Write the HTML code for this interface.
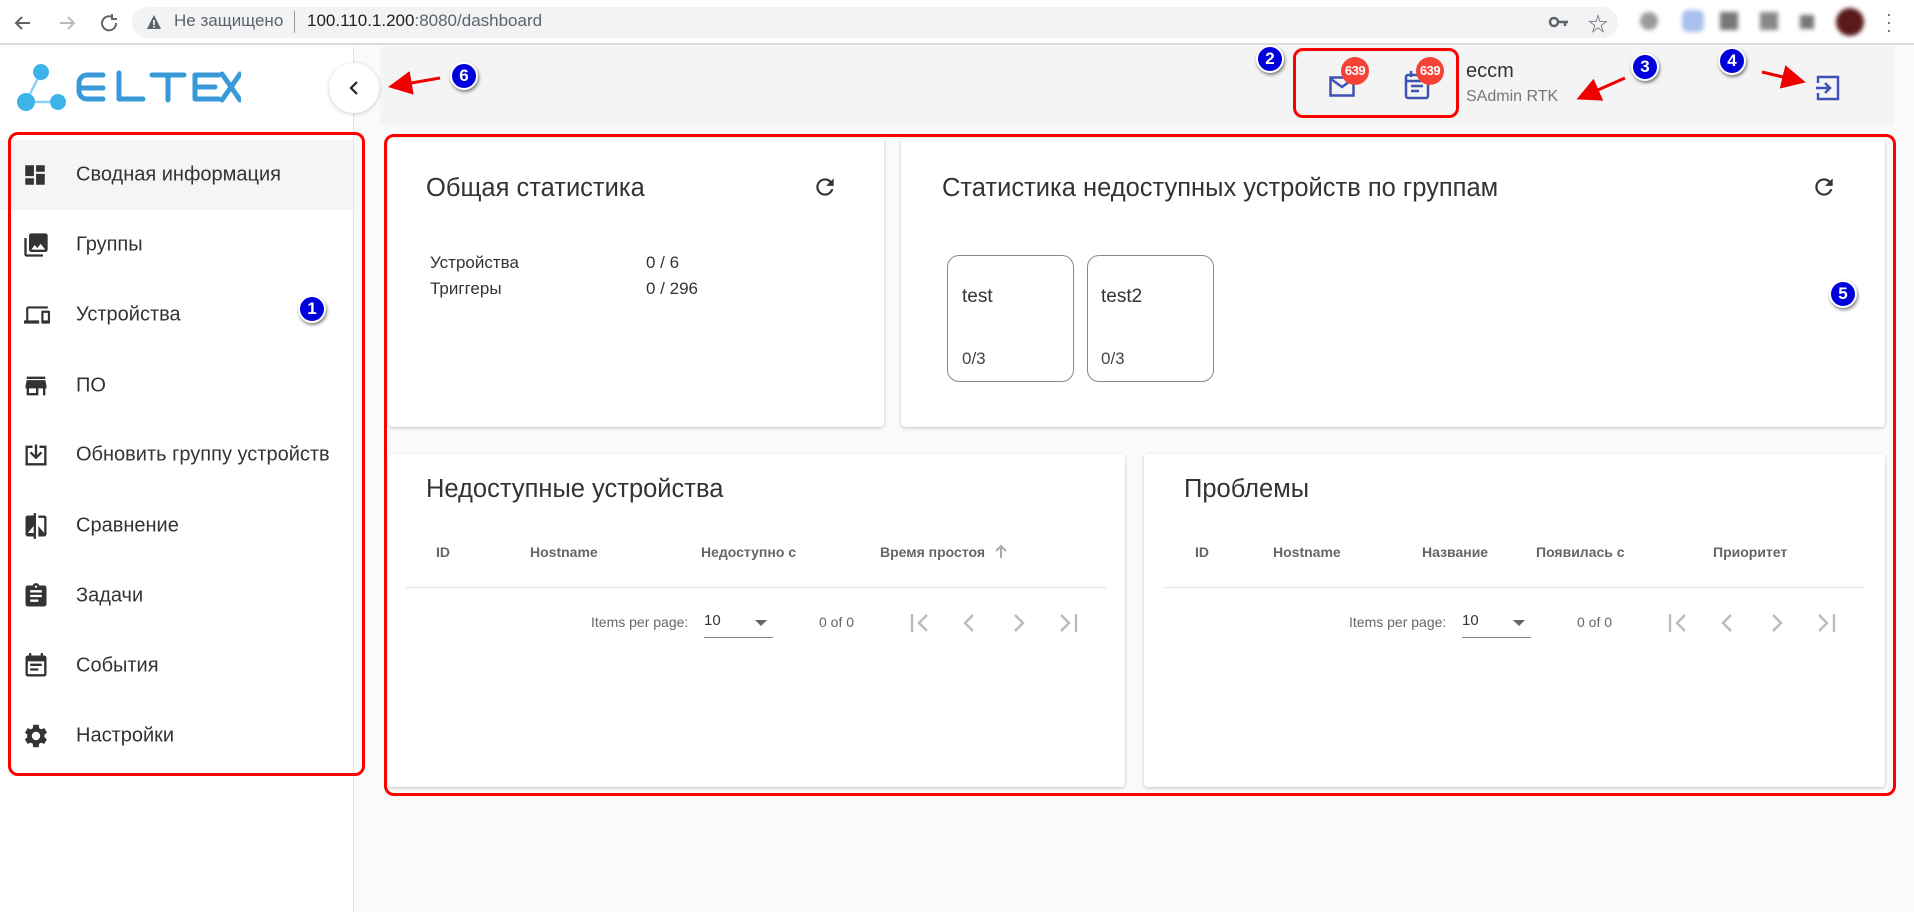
<!DOCTYPE html>
<html><head><meta charset="utf-8">
<style>
*{margin:0;padding:0;box-sizing:border-box}
body{width:1914px;height:912px;overflow:hidden;background:#fafafa;font-family:"Liberation Sans","Noto Sans CJK JP",sans-serif;color:#333;position:relative}
.a{position:absolute}
.chrome{left:0;top:0;width:1914px;height:45px;background:#fff;border-bottom:2px solid #dadce0}
.url{left:132px;top:7px;width:1486px;height:31px;background:#f1f3f4;border-radius:16px}
.side{left:0;top:47px;width:354px;height:865px;background:#fff;border-right:1px solid #e3e3e3}
.head{left:380px;top:47px;width:1514px;height:78px;background:#f4f4f4}
.nav{left:0;width:354px;height:70px;font-size:20px;color:#333}
.nav span{position:absolute;left:76px;top:50%;transform:translateY(-50%)}
.nav svg{position:absolute;left:22px;top:50%;transform:translateY(-50%)}
.card{background:#fff;box-shadow:0 1px 3px rgba(0,0,0,.22);border-radius:4px}
.title{font-size:25.5px;color:#333}
.th{font-size:14px;color:#666;font-weight:bold}
.pg{font-size:14px;color:#666}
.redbox{border:3px solid #f00;border-radius:10px}
.num{width:28px;height:28px;border-radius:50%;background:#0000dd;border:2px solid #fff;box-shadow:1px 2px 3px rgba(0,0,0,.5);color:#fff;font-weight:bold;font-size:17px;text-align:center;line-height:24px}
.badge{width:28px;height:28px;border-radius:50%;background:#f44336;color:#fff;font-size:13px;font-weight:bold;text-align:center;line-height:28px;letter-spacing:-.5px}
.tile{width:127px;height:127px;border:1px solid #888;border-radius:12px;background:#fff}
</style></head><body>
<div class="a chrome"></div>
<svg class="a" style="left:12px;top:12px" width="110" height="22" viewBox="0 0 110 22"><path d="M18 11H4M10 5l-6 6 6 6" stroke="#5f6368" stroke-width="2" fill="none"/><path d="M48 11h14M56 5l6 6-6 6" stroke="#bbb" stroke-width="2" fill="none"/><path d="M100 5a7 7 0 1 0 4 6" stroke="#5f6368" stroke-width="2" fill="none"/><path d="M100 2v5h5" stroke="#5f6368" stroke-width="2" fill="none"/></svg>
<div class="a url"></div>
<svg class="a" style="left:146px;top:14px" width="16" height="16"><path d="M8 1L15 15H1Z" fill="#5f6368"/><rect x="7.2" y="6" width="1.6" height="5" fill="#fff"/><rect x="7.2" y="12" width="1.6" height="1.6" fill="#fff"/></svg>
<div class="a" style="left:174px;top:11px;font-size:17px;color:#5f6368">Не защищено</div>
<div class="a" style="left:294px;top:11px;width:1px;height:22px;background:#999"></div>
<div class="a" style="left:307px;top:11px;font-size:17px;color:#202124">100.110.1.200<span style="color:#5f6368">:8080/dashboard</span></div>
<svg class="a" style="left:1548px;top:14px" width="22" height="16"><circle cx="6" cy="8" r="4" fill="none" stroke="#5f6368" stroke-width="2.5"/><path d="M10 8h10M17 8v4" stroke="#5f6368" stroke-width="2.5"/></svg>
<div class="a" style="left:1588px;top:8px;font-size:20px;color:#5f6368">☆</div>
<div class="a" style="left:1640px;top:12px;width:18px;height:18px;border-radius:50%;background:#999;filter:blur(2px)"></div>
<div class="a" style="left:1682px;top:10px;width:22px;height:22px;border-radius:6px;background:#a9c0ee;filter:blur(2px)"></div>
<div class="a" style="left:1720px;top:12px;width:18px;height:18px;background:#777;filter:blur(2px)"></div>
<div class="a" style="left:1760px;top:12px;width:18px;height:18px;background:#888;filter:blur(2px)"></div>
<div class="a" style="left:1800px;top:15px;width:14px;height:14px;background:#777;filter:blur(2px)"></div>
<div class="a" style="left:1836px;top:8px;width:28px;height:28px;border-radius:50%;background:#5a1a1a;filter:blur(2px)"></div>
<div class="a" style="left:1886px;top:10px;font-size:18px;color:#5f6368;line-height:8px">·<br>·<br>·</div>

<div class="a side"></div>
<div class="a head"></div>
<!-- logo -->
<svg class="a" style="left:15px;top:62px" width="226" height="52" viewBox="0 0 226 52">
<g fill="#3cb4ea"><circle cx="26" cy="10" r="8"/><circle cx="11" cy="40" r="9"/><circle cx="43" cy="40" r="8"/></g>
<path d="M26 10L11 40 43 40" stroke="#3cb4ea" stroke-width="2.5" fill="none" opacity=".6"/>
<g stroke="#3a9ad8" stroke-width="5" fill="none" stroke-linecap="round" stroke-linejoin="round">
<path d="M64 26h24M88 13H72a8 8 0 0 0-8 8v8a8 8 0 0 0 8 8h16"/>
<path d="M104 11v26h24"/>
<path d="M137 13h32M153 13v25"/>
<path d="M204 13h-24v24h24M180 25h20"/>
<path d="M207 12l18 26M225 12l-18 26"/>
</g>
</svg>
<div class="a" style="left:329px;top:63px;width:50px;height:50px;border-radius:50%;background:#fff;box-shadow:0 1px 4px rgba(0,0,0,.2)"></div>
<svg class="a" style="left:347px;top:80px" width="14" height="16"><path d="M10 2L4 8l6 6" stroke="#222" stroke-width="2.2" fill="none"/></svg>

<!-- nav -->
<div class="a nav" style="top:140px;background:#f5f5f5;width:353px"><svg width="26" height="26" viewBox="0 0 24 24"><path d="M3 13h8V3H3zm0 8h8v-6H3zm10 0h8V11h-8zm0-18v6h8V3z" fill="#333"/></svg><span>Сводная информация</span></div>
<div class="a nav" style="top:210px"><svg width="28" height="28" viewBox="0 0 24 24"><path d="M22 16V4c0-1.1-.9-2-2-2H8c-1.1 0-2 .9-2 2v12c0 1.1.9 2 2 2h12c1.1 0 2-.9 2-2zm-11-4l2 2.7 3-3.7 4 5H8zM2 6v14c0 1.1.9 2 2 2h14v-2H4V6z" fill="#333"/></svg><span>Группы</span></div>
<div class="a nav" style="top:280px"><svg width="30" height="26" viewBox="0 0 24 24"><path d="M4 6h18V4H4c-1.1 0-2 .9-2 2v11H0v3h14v-3H4zm19 2h-6c-.55 0-1 .45-1 1v10c0 .55.45 1 1 1h6c.55 0 1-.45 1-1V9c0-.55-.45-1-1-1zm-1 9h-4v-7h4z" fill="#333"/></svg><span>Устройства</span></div>
<div class="a nav" style="top:351px"><svg width="28" height="28" viewBox="0 0 24 24"><path d="M20 4H4v2h16zm1 10v-2l-1-5H4l-1 5v2h1v6h10v-6h4v6h2v-6zm-9 4H6v-4h6z" fill="#333"/></svg><span>ПО</span></div>
<div class="a nav" style="top:420px"><svg width="28" height="28" viewBox="0 0 24 24"><path d="M3 4h6v2H5v13h14V6h-4V4h6v17H3zM11 3h2v9l3-3 1.4 1.4L12 15.8l-5.4-5.4L8 9l3 3z" fill="#333"/></svg><span>Обновить группу устройств</span></div>
<div class="a nav" style="top:491px"><svg width="28" height="28" viewBox="0 0 24 24"><path d="M10 3H5c-1.1 0-2 .9-2 2v14c0 1.1.9 2 2 2h5v2h2V1h-2zm0 15H5l5-6zm9-15h-5v2h5v13l-5-6v9h5c1.1 0 2-.9 2-2V5c0-1.1-.9-2-2-2z" fill="#333"/></svg><span>Сравнение</span></div>
<div class="a nav" style="top:561px"><svg width="28" height="28" viewBox="0 0 24 24"><path d="M19 3h-4.2C14.4 1.8 13.3 1 12 1s-2.4.8-2.8 2H5c-1.1 0-2 .9-2 2v14c0 1.1.9 2 2 2h14c1.1 0 2-.9 2-2V5c0-1.1-.9-2-2-2zm-7 0c.55 0 1 .45 1 1s-.45 1-1 1-1-.45-1-1 .45-1 1-1zm2 14H7v-2h7zm3-4H7v-2h10zm0-4H7V7h10z" fill="#333"/></svg><span>Задачи</span></div>
<div class="a nav" style="top:631px"><svg width="28" height="28" viewBox="0 0 24 24"><path d="M17 10H7v2h10zm2-7h-1V1h-2v2H8V1H6v2H5C3.9 3 3 3.9 3 5v14c0 1.1.9 2 2 2h14c1.1 0 2-.9 2-2V5c0-1.1-.9-2-2-2zm0 16H5V8h14zm-5-5H7v2h7z" fill="#333"/></svg><span>События</span></div>
<div class="a nav" style="top:701px"><svg width="28" height="28" viewBox="0 0 24 24"><path d="M19.14 12.94c.04-.3.06-.61.06-.94 0-.32-.02-.64-.07-.94l2.03-1.58a.49.49 0 0 0 .12-.61l-1.92-3.32a.49.49 0 0 0-.59-.22l-2.39.96c-.5-.38-1.030-.7-1.62-.94l-.36-2.54a.48.48 0 0 0-.48-.41h-3.84c-.24 0-.43.17-.47.41l-.36 2.54c-.59.24-1.13.57-1.62.94l-2.39-.96a.48.48 0 0 0-.59.22L2.74 8.87c-.12.21-.8.47.12.61l2.03 1.58c-.5.3-.8.63-.8.94s.2.64.7.94l-2.03 1.58a.49.49 0 0 0-.12.61l1.92 3.32c.12.22.37.29.59.22l2.39-.96c.5.38 1.03.7 1.62.94l.36 2.54c.5.24.24.41.48.41h3.84c.24 0 .44-.17.47-.41l.36-2.54c.59-.24 1.13-.56 1.620-.94l2.39.96c.22.08.47 0 .59-.22l1.92-3.32a.47.47 0 0 0-.12-.61zM12 15.6A3.6 3.6 0 1 1 12 8.4a3.6 3.6 0 0 1 0 7.2z" fill="#333"/></svg><span>Настройки</span></div>

<!-- header right -->
<svg class="a" style="left:1329px;top:76px" width="26" height="22" viewBox="0 0 26 22"><rect x="1.5" y="1.5" width="23" height="18" fill="none" stroke="#3f51b5" stroke-width="2.5"/><path d="M2 3l11 8 11-8" stroke="#3f51b5" stroke-width="2.5" fill="none"/></svg>
<div class="a badge" style="left:1341px;top:57px">639</div>
<svg class="a" style="left:1404px;top:70px" width="26" height="30" viewBox="0 0 26 30"><rect x="2" y="5" width="22" height="23" rx="2" fill="none" stroke="#3f51b5" stroke-width="2.5"/><path d="M7 1v6M19 1v6M2 11h22M7 16h12M7 21h8" stroke="#3f51b5" stroke-width="2.5"/></svg>
<div class="a badge" style="left:1416px;top:57px">639</div>
<div class="a" style="left:1466px;top:60px;font-size:20px;color:#333">eccm</div>
<div class="a" style="left:1466px;top:88px;font-size:16px;color:#777">SAdmin RTK</div>
<svg class="a" style="left:1815px;top:75px" width="26" height="26" viewBox="0 0 26 26"><path d="M3 8V2h20v22H3v-6" fill="none" stroke="#3f51b5" stroke-width="2.4"/><path d="M1 13h14M10 8l5 5-5 5" fill="none" stroke="#3f51b5" stroke-width="2.4"/></svg>

<!-- cards -->
<div class="a card" style="left:388px;top:138px;width:496px;height:289px"></div>
<div class="a title" style="left:426px;top:174px">Общая статистика</div>
<svg class="a" style="left:812px;top:174px" width="26" height="26" viewBox="0 0 24 24"><path d="M17.65 6.35A7.96 7.96 0 0 0 12 4a8 8 0 1 0 7.73 10h-2.08A6 6 0 1 1 12 6c1.66 0 3.140.69 4.22 1.78L13 11h7V4z" fill="#333"/></svg>
<div class="a" style="left:430px;top:253px;font-size:17px;color:#333">Устройства</div>
<div class="a" style="left:646px;top:253px;font-size:17px;color:#333">0 / 6</div>
<div class="a" style="left:430px;top:279px;font-size:17px;color:#333">Триггеры</div>
<div class="a" style="left:646px;top:279px;font-size:17px;color:#333">0 / 296</div>

<div class="a card" style="left:901px;top:138px;width:984px;height:289px"></div>
<div class="a title" style="left:942px;top:174px">Статистика недоступных устройств по группам</div>
<svg class="a" style="left:1811px;top:174px" width="26" height="26" viewBox="0 0 24 24"><path d="M17.65 6.35A7.96 7.96 0 0 0 12 4a8 8 0 1 0 7.73 10h-2.08A6 6 0 1 1 12 6c1.66 0 3.140.69 4.22 1.78L13 11h7V4z" fill="#333"/></svg>
<div class="a tile" style="left:947px;top:255px"></div>
<div class="a" style="left:962px;top:286px;font-size:19px;color:#333">test</div>
<div class="a" style="left:962px;top:349px;font-size:17px;color:#444">0/3</div>
<div class="a tile" style="left:1087px;top:255px"></div>
<div class="a" style="left:1101px;top:286px;font-size:19px;color:#333">test2</div>
<div class="a" style="left:1101px;top:349px;font-size:17px;color:#444">0/3</div>

<div class="a card" style="left:388px;top:454px;width:737px;height:333px"></div>
<div class="a title" style="left:426px;top:475px">Недоступные устройства</div>
<div class="a th" style="left:436px;top:544px">ID</div>
<div class="a th" style="left:530px;top:544px">Hostname</div>
<div class="a th" style="left:701px;top:544px">Недоступно с</div>
<div class="a th" style="left:880px;top:544px">Время простоя</div>
<svg class="a" style="left:994px;top:543px" width="14" height="16"><path d="M7 15V3M2 8l5-5 5 5" stroke="#aaa" stroke-width="2" fill="none"/></svg>
<div class="a" style="left:406px;top:587px;width:700px;height:1px;background:#e0e0e0"></div>
<div class="a pg" style="left:591px;top:614px">Items per page:</div>
<div class="a" style="left:704px;top:612px;font-size:15px;color:#333">10</div>
<div class="a" style="left:755px;top:620px;border:6px solid transparent;border-top:6px solid #666"></div>
<div class="a" style="left:704px;top:637px;width:69px;height:1px;background:#888"></div>
<div class="a pg" style="left:819px;top:614px">0 of 0</div>
<svg class="a" style="left:910px;top:610px" width="180" height="26" viewBox="0 0 180 26" fill="none" stroke="#bbb" stroke-width="2.4"><path d="M2 4v18M17 5l-8 8 8 8M63 5l-8 8 8 8M105 5l8 8-8 8M151 5l8 8-8 8M166 4v18"/></svg>

<div class="a card" style="left:1144px;top:454px;width:741px;height:333px"></div>
<div class="a title" style="left:1184px;top:475px">Проблемы</div>
<div class="a th" style="left:1195px;top:544px">ID</div>
<div class="a th" style="left:1273px;top:544px">Hostname</div>
<div class="a th" style="left:1422px;top:544px">Название</div>
<div class="a th" style="left:1536px;top:544px">Появилась с</div>
<div class="a th" style="left:1713px;top:544px">Приоритет</div>
<div class="a" style="left:1165px;top:587px;width:700px;height:1px;background:#e0e0e0"></div>
<div class="a pg" style="left:1349px;top:614px">Items per page:</div>
<div class="a" style="left:1462px;top:612px;font-size:15px;color:#333">10</div>
<div class="a" style="left:1513px;top:620px;border:6px solid transparent;border-top:6px solid #666"></div>
<div class="a" style="left:1462px;top:637px;width:69px;height:1px;background:#888"></div>
<div class="a pg" style="left:1577px;top:614px">0 of 0</div>
<svg class="a" style="left:1668px;top:610px" width="180" height="26" viewBox="0 0 180 26" fill="none" stroke="#bbb" stroke-width="2.4"><path d="M2 4v18M17 5l-8 8 8 8M63 5l-8 8 8 8M105 5l8 8-8 8M151 5l8 8-8 8M166 4v18"/></svg>

<!-- annotations -->
<div class="a redbox" style="left:8px;top:132px;width:357px;height:644px"></div>
<div class="a redbox" style="left:384px;top:134px;width:1512px;height:662px"></div>
<div class="a redbox" style="left:1293px;top:48px;width:166px;height:70px"></div>
<div class="a num" style="left:298px;top:295px">1</div>
<div class="a num" style="left:1256px;top:45px">2</div>
<div class="a num" style="left:1631px;top:53px">3</div>
<div class="a num" style="left:1718px;top:47px">4</div>
<div class="a num" style="left:1829px;top:280px">5</div>
<div class="a num" style="left:450px;top:62px">6</div>
<svg class="a" style="left:0;top:0" width="1914" height="912">
<defs><marker id="ar" markerWidth="8" markerHeight="8" refX="6" refY="4" orient="auto"><path d="M0 0L8 4 0 8Z" fill="#e00"/></marker></defs>
<g stroke="#e00" stroke-width="3" marker-end="url(#ar)">
<line x1="440" y1="78" x2="394" y2="86"/>
<line x1="1625" y1="78" x2="1582" y2="97"/>
<line x1="1762" y1="72" x2="1800" y2="81"/>
</g></svg>
</body></html>
